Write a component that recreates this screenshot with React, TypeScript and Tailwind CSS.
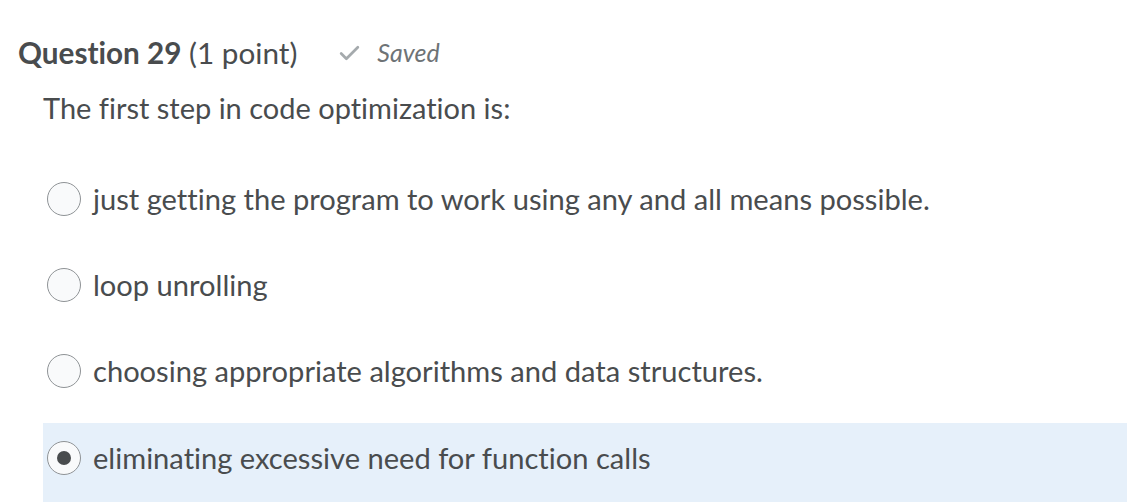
import { Check } from "lucide-react";

const options = [
  { id: "a", label: "just getting the program to work using any and all means possible." },
  { id: "b", label: "loop unrolling" },
  { id: "c", label: "choosing appropriate algorithms and data structures." },
  { id: "d", label: "eliminating excessive need for function calls" },
];

function Radio({ checked }: { checked: boolean }) {
  return (
    <span className="flex h-[34px] w-[34px] shrink-0 items-center justify-center rounded-full border border-[#8f9396] bg-[#f9fafb]">
      {checked ? <span className="h-[14px] w-[14px] rounded-full bg-[#494c4e]" /> : null}
    </span>
  );
}

export default function App() {
  const selected = "d";

  return (
    <div className="min-h-[502px] bg-white font-['Lato','Liberation_Sans',sans-serif] text-[#494c4e] [font-variant-ligatures:none]">
      <div className="flex items-center pl-[18px] pt-[34px]">
        <h2 className="text-[29.7px] leading-[38px]">
          <span className="font-bold">Question 29</span> (1 point)
        </h2>
        <span className="ml-[40px] flex items-center text-[#6e7376]">
          <Check className="h-[25px] w-[25px] text-[#a5aaad]" strokeWidth={2.6} />
          <span className="ml-[15px] text-[25px] italic">Saved</span>
        </span>
      </div>

      <p className="mt-[17px] pl-[43px] text-[29px] leading-[38px]">
        The first step in code optimization is:
      </p>

      <div className="mt-[37px] ml-[43px] flex w-[1084px] flex-col gap-[16px]">
        {options.map((option) => (
          <label
            key={option.id}
            className={
              option.id === selected
                ? "flex h-[79px] items-center gap-[12px] bg-[#e6f0fa] pl-[4px] pb-[9px] mt-[1px]"
                : "flex h-[70px] items-center gap-[12px] pl-[4px]"
            }
          >
            <Radio checked={option.id === selected} />
            <span className="text-[29.1px] leading-[36px]">{option.label}</span>
          </label>
        ))}
      </div>
    </div>
  );
}
